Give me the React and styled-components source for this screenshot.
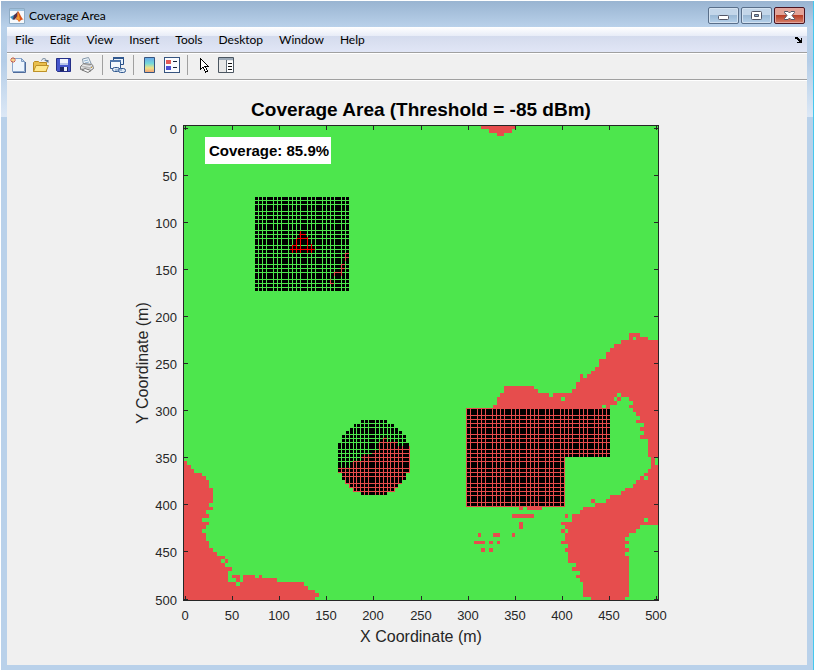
import styled, { createGlobalStyle } from "styled-components";
// -----------------------------------------------------
const menus = ["File", "Edit", "View", "Insert", "Tools", "Desktop", "Window", "Help"];

// pixel position of every 50 m on both axes
const ticks = [
  { label: "0", x: 185, y: 128 },
  { label: "50", x: 232, y: 175 },
  { label: "100", x: 279, y: 222 },
  { label: "150", x: 326, y: 269 },
  { label: "200", x: 373, y: 316 },
  { label: "250", x: 421, y: 363 },
  { label: "300", x: 468, y: 410 },
  { label: "350", x: 515, y: 457 },
  { label: "400", x: 562, y: 504 },
  { label: "450", x: 609, y: 551 },
  { label: "500", x: 656, y: 599 },
];

const weakAreas = [
  // south west
  "M183 461H187V465H191V469H194V473H202V476H206V480H209V488H213V503H209V507H213V510H206V514H209V518H202V522H209V525H206V529H202V533H206V541H209V548H213V552H217V556H225V559H228V563H225V567H232V571H228V582H236V586H240V582H243V575H255V578H259V575H262V578H277V582H304V586H308V590H315V593H319V597H315V600H183ZM221 559V563H225V559ZM232 575H240V582H236V578H232Z",
  // north
  "M481 126H515V129H512V133H504V136H497V133H489V129H481Z",
  // east
  "M493 410V405H497V397H500V393H504V386H534V389H538V393H549V397H553V393H572V389H576V382H580V374H583V378H587V374H591V371H595V367H599V359H606V352H610V348H614V344H621V340H629V333H640V337H648V340H658V458H655V465H658V525H640V529H636V533H629V537H625V541H629V544H625V548H629V552H625V556H629V597H625V600H591V597H583V582H580V578H576V575H580V571H572V567H576V563H568V552H565V548H568V544H561V541H565V533H568V529H561V529H565V522H561V522H572V514H580V510H583V507H595V503H606V499H610V495H621V491H625V488H633V484H636V480H640V476H644V473H648V469H651V457H648V439H640V435H644V431H640V427H644V423H636V420H640V416H636V412H633V408H629V405H633V401H629V397H621V393H617V397H614V401H617V405H610V410ZM633 337V340H636V337ZM561 397V401H565V397ZM602 405V408H606V405ZM644 476V480H648V476ZM644 518V522H648V518Z",
  // cells standing alone
  "M617 397h4v4h-4zM561 522h4v3h-4zM561 529h4v4h-4zM591 499h4v4h-4zM565 514h3v4h-3zM519 507h4v3h-4zM527 507h15v3h-15zM512 514h22v4h-22zM519 522h4v7h-4zM478 533h3v4h-3zM493 533h7v4h-7zM512 533h3v4h-3zM474 541h11v3h-11zM489 541h4v3h-4zM497 541h3v3h-3zM481 548h4v4h-4zM489 548h4v4h-4z",
].join("");

const range = (list, fn) => list.map(fn).join("");

const squareGrid =
  range(
    [258, 262, 266, 273, 277, 281, 288, 292, 296, 300, 307, 311, 315, 322, 326, 330, 334, 341, 345],
    (x) => `M${x} 197h1v94h-1z`
  ) +
  range(
    [200, 204, 211, 215, 219, 223, 230, 234, 238, 245, 249, 253, 257, 264, 268, 272, 279, 283, 287],
    (y) => `M255 ${y}h94v1h-94z`
  );

const circleShape =
  "M361 420H387V424H394V428H398V431H402V435H406V443H409V472H406V480H402V484H398V488H395V492H387V495H361V492H353V488H349V484H345V480H342V473H338V443H342V435H346V431H350V428H353V424H361Z";
const circleGrid =
  range(
    [341, 345, 349, 353, 356, 360, 364, 368, 375, 379, 383, 387, 390, 394, 398, 402],
    (x) => `M${x} 419h1v77h-1z`
  ) +
  range(
    [423, 427, 434, 438, 442, 449, 453, 457, 461, 468, 472, 476, 483, 487, 491],
    (y) => `M337 ${y}h72v1h-72z`
  );

const lShape = "M466 408H610V457H565V507H466Z";
const lGrid =
  range(
    [466, 470, 477, 481, 485, 492, 496, 500, 504, 511, 515, 519, 526, 530, 534, 538, 545, 549, 553, 560, 564, 568, 572, 579, 583, 587, 594, 598, 602, 606],
    (x) => `M${x} 408h1v99h-1z`
  ) +
  range(
    [408, 415, 419, 423, 427, 434, 438, 442, 449, 453, 457, 461, 468, 472, 476, 483, 487, 491, 495, 502, 506],
    (y) => `M466 ${y}h144v1h-144z`
  );
// -----------------------------------------------------
const CoverageChart = () => {
  return (
    <Chart viewBox="130 96 554 554" role="img" aria-label="Coverage Area">
      <defs>
        <clipPath id="circle-shape">
          <path d={circleShape} />
        </clipPath>
        <clipPath id="circle-weak">
          <path d="M338 468H353V461H361V457H364V454H372V450H379V442H383V438H387V442H398V446H410V496H338Z" />
        </clipPath>
        <clipPath id="l-shape">
          <path d={lShape} />
        </clipPath>
      </defs>

      <g shapeRendering="crispEdges">
        <rect x="184" y="126" width="474" height="474" fill="#4de64d" />
        <path d={weakAreas} fill="#e64d4d" fillRule="evenodd" />

        <rect x="255" y="197" width="94" height="94" fill="#000" />
        <path d={squareGrid} fill="#4de64d" />
        <path
          fill="#f00"
          d="M300 231h1v22h-1zM299 234h7v1h-7zM297 238h11v1h-11zM292 246h1v7h-1zM296 239h1v14h-1zM307 237h1v16h-1zM311 244h1v9h-1zM290 249h25v1h-25zM292 245h5v1h-5z"
        />
        <path
          fill="#e64d4d"
          d="M345 253h1v8h-1zM345 253h4v1h-4zM345 257h4v1h-4zM342 264h3v1h-3zM342 268h3v1h-3zM341 264h1v12h-1zM334 272h8v1h-8zM334 272h1v4h-1zM330 279h1v5h-1zM330 283h4v1h-4z"
        />

        <path d={circleShape} fill="#000" />
        <g clipPath="url(#circle-shape)">
          <path d={circleGrid} fill="#4de64d" />
          <path d={circleGrid} fill="#e64d4d" clipPath="url(#circle-weak)" />
        </g>
        <path
          fill="#e64d4d"
          d="M409 446h1v27h-1zM406 472h4v1h-4zM345 480h1v4h-1zM345 483h5v1h-5zM349 484h1v4h-1zM349 487h5v1h-5zM394 488h1v3h-1z"
        />

        <path d={lShape} fill="#000" />
        <path d={lGrid} fill="#e64d4d" clipPath="url(#l-shape)" />

        <path d="M183 125H659V601H183ZM184 126V600H658V126Z" fill="#262626" fillRule="evenodd" />
        {ticks.map((t) => (
          <path
            key={t.label}
            fill="#262626"
            d={`M${t.x} 126h1v4h-1zM${t.x} 596h1v4h-1zM184 ${t.y}h4v1h-4zM654 ${t.y}h4v1h-4z`}
          />
        ))}
        <rect x="205" y="137" width="126" height="27" fill="#fff" />
      </g>

      <ChartTitle x="421" y="116">Coverage Area (Threshold = -85 dBm)</ChartTitle>
      <Badge x="209" y="156">Coverage: 85.9%</Badge>
      {ticks.map((t) => (
        <g key={t.label}>
          <TickLabel x={t.x} y="620" textAnchor="middle">{t.label}</TickLabel>
          <TickLabel x="177" y={t.y + 6} textAnchor="end">{t.label}</TickLabel>
        </g>
      ))}
      <AxisLabel x="421" y="642">X Coordinate (m)</AxisLabel>
      <AxisLabel x="0" y="0" transform="translate(148 363) rotate(-90)">
        Y Coordinate (m)
      </AxisLabel>
    </Chart>
  );
};
// -----------------------------------------------------
const MatlabIcon = () => (
  <svg width="16" height="16" viewBox="0 0 16 16">
    <path d="M.5 .5h15v15H.5z" fill="#f7f9fb" stroke="#8eabc4" />
    <path d="M1 1h14v2H1z" fill="#9fc2df" />
    <path d="M1 9l4-2 2 2-3 3z" fill="#3c8fc0" />
    <path d="M5 7c2-1 3-3 4-4l-1 6-3 3-1-1z" fill="#50324c" />
    <path d="M9 3c2 2 3 7 6 9-2-1-3 0-5 2-1-2-2-3-4-2 2-2 2-6 3-9z" fill="#d95319" />
    <path d="M9 4c0 4-1 6-2 7 2 0 3 1 3 3l1-3z" fill="#f29a2e" />
  </svg>
);
const NewIcon = () => (
  <svg width="16" height="16" viewBox="0 0 16 16">
    <path d="M2.500 1.500h9l3 3v10h-12z" fill="#edf5fd" stroke="#8aa6cc" />
    <path d="M3 15.500h12.500V5" fill="none" stroke="#4f6b9a" />
    <path d="M11.500 1.500v3h3z" fill="#c4d9f0" stroke="#7e9bc2" />
    <path d="M3 0v6M0 3h6M1 1l4 4M5 1L1 5" stroke="#d4633d" />
    <path d="M2 2h2v2H2z" fill="#ffd976" />
  </svg>
);
const OpenIcon = () => (
  <svg width="16" height="16" viewBox="0 0 16 16">
    <path d="M.500 14.500v-9l1-1h4l1 1h7v9z" fill="#e9bf4d" stroke="#b98a20" />
    <path d="M.500 14.500l2.500-6h12.500l-2.500 6z" fill="#ffe88c" stroke="#bd9128" />
    <path d="M8.500 3.500c1-2.500 4-2.500 5 0" fill="none" stroke="#5e7690" />
    <path d="M11 3h4.500v3z" fill="#5e7690" />
  </svg>
);
const SaveIcon = () => (
  <svg width="16" height="16" viewBox="0 0 16 16">
    <path d="M.500 1.500h14v13h-13l-1-1z" fill="#4657cc" stroke="#252f87" />
    <path d="M4 2h8v6H4z" fill="#f1f4fc" />
    <path d="M4 6h8v2H4z" fill="#b9c6ea" />
    <path d="M4 10h8v4H4z" fill="#1c255f" />
    <path d="M8 10h3v4H8z" fill="#eef1fb" />
  </svg>
);
const PrintIcon = () => (
  <svg width="16" height="16" viewBox="0 0 16 16">
    <path d="M4.500 8L3.500 2l6-1.500 3 7z" fill="#edf4fa" stroke="#8497a9" />
    <path d="M5 4l4-1M6 6l4-1" stroke="#90b2ce" />
    <path d="M1.500 9.500l3-3 9 1 1 4-4 3-9-2z" fill="#bcbcbc" stroke="#808080" />
    <path d="M3 8l8 1.500 2.500-2M2 10.500l9 2 3-2" fill="none" stroke="#eee" />
    <path d="M3 13l6 2.500 3-2-6-2z" fill="#f8f8f8" stroke="#777" />
    <path d="M12 10h1v1h-1z" fill="#cd9a21" />
  </svg>
);
const LinkIcon = () => (
  <svg width="16" height="16" viewBox="0 0 16 16">
    <path d="M3.500 .500h10v7h-10z" fill="#e8f2fb" stroke="#264c84" />
    <path d="M3 0h11v2H3z" fill="#31588f" />
    <path d="M.500 3.500h10v8H.500z" fill="#f4f9fd" stroke="#31588f" />
    <path d="M0 3h11v2H0z" fill="#5279ad" />
    <rect x="2.500" y="10.500" width="7" height="4" rx="2" fill="#dce8f4" stroke="#31588f" />
    <rect x="8.500" y="11.500" width="7" height="4" rx="2" fill="#dce8f4" stroke="#31588f" />
    <path d="M5 13h7" stroke="#6689b6" />
  </svg>
);
const ColorbarIcon = () => (
  <svg width="16" height="16" viewBox="0 0 16 16">
    <defs>
      <linearGradient id="bar" x2="0" y2="1">
        <stop offset="0" stopColor="#68a6ec" />
        <stop offset=".4" stopColor="#75d9d8" />
        <stop offset=".7" stopColor="#f2e184" />
        <stop offset="1" stopColor="#f09d78" />
      </linearGradient>
    </defs>
    <path d="M3.500 .500h10v15h-10z" fill="url(#bar)" stroke="#36547f" />
  </svg>
);
const LegendIcon = () => (
  <svg width="16" height="16" viewBox="0 0 16 16" shapeRendering="crispEdges">
    <path d="M0 0h16v16H0z" fill="#36547f" />
    <path d="M1 1h14v14H1z" fill="#fafcff" />
    <path d="M2 3h5v4H2z" fill="#e45b55" />
    <path d="M2 9h5v4H2z" fill="#4c50d4" />
    <path d="M9 4h4v1H9zM9 10h4v1H9z" fill="#18243a" />
  </svg>
);
const PointerIcon = () => (
  <svg width="16" height="16" viewBox="0 0 16 16">
    <path
      d="M5.500 1.500v11l2.500-2.500 2.500 5 2-1-2.500-4.500h3.500z"
      fill="#fff"
      stroke="#000"
      shapeRendering="crispEdges"
    />
  </svg>
);
const InspectorIcon = () => (
  <svg width="16" height="16" viewBox="0 0 16 16">
    <path d="M.500 .500h15v15H.500z" fill="#e8e8e8" stroke="#4b5661" />
    <path d="M1 1h14v2H1z" fill="#9ba9b7" />
    <path d="M9 4h6v11H9z" fill="#fff" />
    <path d="M8 3h1v12H8z" fill="#626d78" />
    <path d="M10 6h4v1h-4zM10 9h4v1h-4zM10 12h4v1h-4z" fill="#151515" />
  </svg>
);

const toolGroups = [
  [
    { name: "New Figure", Icon: NewIcon },
    { name: "Open File", Icon: OpenIcon },
    { name: "Save Figure", Icon: SaveIcon },
    { name: "Print Figure", Icon: PrintIcon },
  ],
  [{ name: "Link Plot", Icon: LinkIcon }],
  [
    { name: "Insert Colorbar", Icon: ColorbarIcon },
    { name: "Insert Legend", Icon: LegendIcon },
  ],
  [
    { name: "Edit Plot", Icon: PointerIcon },
    { name: "Open Property Inspector", Icon: InspectorIcon },
  ],
];
// -----------------------------------------------------
const App = () => {
  return (
    <>
      <GlobalStyle />
      <Window>
        <TitleBar>
          <MatlabIcon />
          <Title>Coverage Area</Title>
          <WindowButton aria-label="Minimize">
            <svg width="13" height="11" viewBox="0 0 13 11">
              <rect x="1.500" y="5.500" width="10" height="4" rx="1" fill="#fff" stroke="#535666" />
            </svg>
          </WindowButton>
          <WindowButton aria-label="Maximize">
            <svg width="13" height="11" viewBox="0 0 13 11">
              <rect x="1.500" y="1.500" width="10" height="8" rx="1" fill="#fff" stroke="#535666" />
              <path d="M4.500 4.500h4v2h-4z" fill="#8db0cf" stroke="#535666" />
            </svg>
          </WindowButton>
          <WindowButton aria-label="Close" $close>
            <svg width="13" height="11" viewBox="0 0 13 11">
              <path
                d="M1.500 1.500h3.500l1.500 1.500 1.500-1.500h3.500v1l-2.500 3 2.500 3v1h-3.500l-1.500-1.500-1.500 1.500h-3.500v-1l2.500-3-2.500-3z"
                fill="#fff"
                stroke="#535666"
              />
            </svg>
          </WindowButton>
        </TitleBar>
        <MenuBar>
          {menus.map((name) => (
            <MenuButton key={name}>{name}</MenuButton>
          ))}
          <DockButton aria-label="Dock Figure">
            <svg width="8" height="8" viewBox="0 0 8 8" shapeRendering="crispEdges">
              <path d="M0 1h3v1h1v1h1v1h1V2h1v5H2V6h2V5H3V4H2V3H0z" fill="#000" />
            </svg>
          </DockButton>
        </MenuBar>
        <ToolBar>
          {toolGroups.map((group, index) => (
            <ToolGroup key={index}>
              {group.map(({ name, Icon }) => (
                <ToolButton key={name} aria-label={name}>
                  <Icon />
                </ToolButton>
              ))}
            </ToolGroup>
          ))}
        </ToolBar>
        <Figure>
          <CoverageChart />
        </Figure>
      </Window>
    </>
  );
};
export default App;

const GlobalStyle = createGlobalStyle`
  * {
    box-sizing: border-box;
  }
  body {
    margin: 0;
    background-color: #fff;
    font-family: Lato, "Open Sans", sans-serif;
    font-size: 12px;
    color: #000;
  }
  button {
    font: inherit;
    color: inherit;
    border: 0;
    padding: 0;
    background: transparent;
  }
  svg {
    display: block;
  }
`;

const Window = styled.div`
  display: flex;
  flex-direction: column;
  min-height: calc(100vh - 2px);
  margin: 1px;
  padding: 0 6px 5px;
  border-right: 1px solid #45c8ee;
  background: linear-gradient(
    #99b4d1 0,
    #b9d1ea 26px,
    #b4cde7 60px,
    #dce8f6 116px,
    #b9d1ea 116px
  );
`;

const TitleBar = styled.header`
  display: flex;
  align-items: center;
  gap: 2px;
  height: 26px;
  padding: 3px 2px 0;
`;

const Title = styled.h1`
  flex: 1;
  margin: 0;
  padding-left: 2px;
  font-size: 12px;
  line-height: 16px;
  font-weight: 400;
`;

const WindowButton = styled.button`
  display: flex;
  justify-content: center;
  align-items: center;
  width: 31px;
  height: 17px;
  border: 1px solid ${({ $close }) => ($close ? "#4a1420" : "#596f8a")};
  border-radius: 2px;
  box-shadow: inset 0 0 0 1px ${({ $close }) => ($close ? "#e2a59d" : "#d3e2f1")};
  background: ${({ $close }) =>
    $close
      ? "linear-gradient(#e3a397 50%, #b93f26 50%, #d6816b)"
      : "linear-gradient(#c3d6e9 50%, #9bb9d5 50%, #b5d1ea)"};
`;

const MenuBar = styled.nav`
  display: flex;
  align-items: center;
  height: 26px;
  border-bottom: 1px solid #a0a0a0;
  background: linear-gradient(#fff 0, #e8ecf7 9px, #d4dbed 9px, #e1e6f6 25px);
`;

const MenuButton = styled.button`
  padding: 0 8px;
  line-height: 16px;
`;

const DockButton = styled.button`
  margin-left: auto;
  padding-right: 4px;
`;

const ToolBar = styled.div`
  display: flex;
  align-items: center;
  height: 27px;
  padding-bottom: 3px;
  border-top: 1px solid #fff;
  border-bottom: 1px solid #a0a0a0;
  background-color: #f0f0f0;
`;

const ToolGroup = styled.div`
  display: flex;
  align-items: center;
  & + & {
    margin-left: 3px;
    padding-left: 4px;
    border-left: 1px solid #a0a0a0;
  }
`;

const ToolButton = styled.button`
  display: flex;
  align-items: center;
  width: 23px;
  height: 20px;
  padding: 0 4px 0 3px;
`;

const Figure = styled.main`
  flex: 1;
  display: flex;
  justify-content: center;
  align-items: flex-start;
  padding-top: 15px;
  border-top: 1px solid #fff;
  background-color: #f0f0f0;
`;

const Chart = styled.svg`
  width: 100%;
  max-width: 554px;
  font-family: "Liberation Sans", Arial, sans-serif;
  fill: #262626;
`;

const ChartTitle = styled.text`
  font-size: 19px;
  font-weight: 700;
  text-anchor: middle;
  fill: #000;
`;

const Badge = styled.text`
  font-size: 15px;
  font-weight: 700;
  fill: #000;
`;

const TickLabel = styled.text`
  font-size: 13px;
`;

const AxisLabel = styled.text`
  font-size: 16px;
  text-anchor: middle;
`;
